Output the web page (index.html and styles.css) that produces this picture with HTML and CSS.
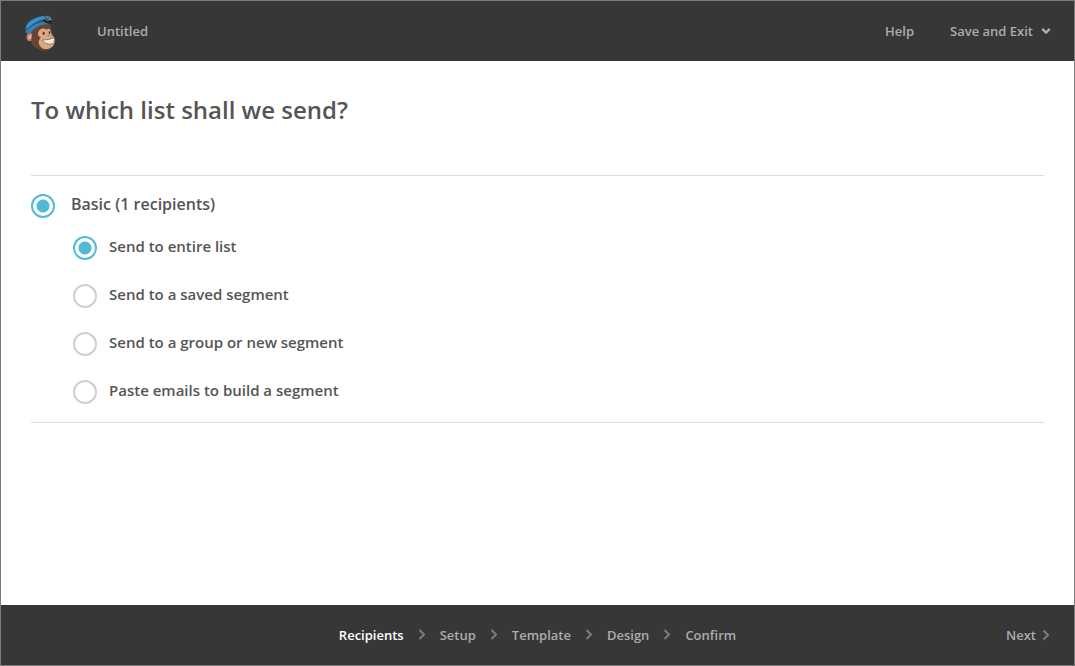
FILE: index.html
```html
<!DOCTYPE html>
<html lang="en">
<head>
<meta charset="utf-8">
<meta name="viewport" content="width=device-width, initial-scale=1">
<title>Campaign Builder</title>
<link rel="stylesheet" href="styles.css">
</head>
<body>
<div class="app">
  <header class="bar">
    <a class="logo" href="#" aria-label="Home">
      <svg viewBox="24 18 102 114" width="34" height="38" aria-hidden="true">
        <path d="M42 68C40 58 46 48 60 43L94 38C106 42 109 54 108 66L116 82C123 92 122 108 113 118C104 130 84 131 72 124C60 118 51 112 48 101Z" fill="#674433"/>
        <path d="M48 99C38 101 33 93 35 84C37 74 47 72 52 79Z" fill="#bd866a"/>
        <path d="M47 94C41 94 39 89 41 84C43 80 48 81 49 84Z" fill="#e9b597"/>
        <path d="M70 72C77 58 91 61 94 66C101 57 109 65 107 75L113 83C123 91 121 108 111 116C101 126 83 125 77 116C69 109 70 96 77 89C70 85 67 79 70 72Z" fill="#d9a987"/>
        <path d="M82 96C94 97 107 93 117 89C119 97 118 105 112 107C102 110 88 108 82 96Z" fill="#fffaf0" stroke="#6d4a3a" stroke-width="2"/>
        <path d="M84 101C96 104 108 101 118 98" fill="none" stroke="#aa8b77" stroke-width="1"/>
        <ellipse cx="86" cy="76" rx="3" ry="5" fill="#49342d"/>
        <ellipse cx="103" cy="74" rx="2" ry="5" fill="#49342d"/>
        <path d="M97 84L103 83M107 84L110 83" stroke="#7e5140" stroke-width="2"/>
        <path d="M31 68C30 53 37 43 50 34C61 27 77 24 92 23C103 22 111 27 113 37L106 50C80 43 58 54 42 76Z" fill="#2b5f89"/>
        <path d="M33 58C38 41 62 27 89 24C99 24 105 27 107 31C82 30 57 42 37 62Z" fill="#4091c8"/>
        <path d="M32 68C48 47 77 37 104 42L112 50C84 46 65 52 46 75C40 80 32 76 32 68Z" fill="#3a80b7"/>
        <path d="M35 66C52 49 72 41 90 39" fill="none" stroke="#24517a" stroke-width="3"/>
        <path d="M82 37C91 33 103 34 113 39L109 51L96 46C92 45 86 43 82 37Z" fill="#202d38"/>
        <path d="M86 25L93 34L103 27L109 35L96 38Z" fill="#948f68"/>
        <path d="M89 26L98 35M103 30L97 34" stroke="#202d38" stroke-width="3"/>
      </svg>
    </a>
    <span class="campaign">Untitled</span>
    <nav class="actions" aria-label="Account">
      <a href="#">Help</a>
      <button class="menu" type="button">Save and Exit
        <svg viewBox="0 0 10 8" width="10" height="8" aria-hidden="true"><path d="M1.2 1.8L5 5.6L8.8 1.8" fill="none" stroke="currentColor" stroke-width="2.4"/></svg>
      </button>
    </nav>
  </header>
  <main class="content">
    <h1>To which list shall we send?</h1>
    <form class="lists">
      <label class="option list"><input type="radio" name="list" checked><span>Basic (1 recipients)</span></label>
      <div class="segments">
        <label class="option"><input type="radio" name="segment" checked><span>Send to entire list</span></label>
        <label class="option"><input type="radio" name="segment"><span>Send to a saved segment</span></label>
        <label class="option"><input type="radio" name="segment"><span>Send to a group or new segment</span></label>
        <label class="option"><input type="radio" name="segment"><span>Paste emails to build a segment</span></label>
      </div>
    </form>
  </main>
  <footer class="bar footer">
    <nav class="steps" aria-label="Steps">
      <a class="current" href="#" aria-current="step">Recipients</a>
      <svg class="chevron" viewBox="0 0 8 12" width="8" height="12" aria-hidden="true"><path d="M1.5 1L6 5.5L1.5 10"/></svg>
      <a href="#">Setup</a>
      <svg class="chevron" viewBox="0 0 8 12" width="8" height="12" aria-hidden="true"><path d="M1.5 1L6 5.5L1.5 10"/></svg>
      <a href="#">Template</a>
      <svg class="chevron" viewBox="0 0 8 12" width="8" height="12" aria-hidden="true"><path d="M1.5 1L6 5.5L1.5 10"/></svg>
      <a href="#">Design</a>
      <svg class="chevron" viewBox="0 0 8 12" width="8" height="12" aria-hidden="true"><path d="M1.5 1L6 5.5L1.5 10"/></svg>
      <a href="#">Confirm</a>
    </nav>
    <a class="next" href="#">Next
      <svg class="chevron" viewBox="0 0 8 12" width="8" height="12" aria-hidden="true"><path d="M1.5 1.5L6 6L1.5 10.5"/></svg>
    </a>
  </footer>
</div>
</body>
</html>
```
FILE: styles.css
```css
* {
  box-sizing: border-box;
}

body {
  margin: 0;
  background: #fff;
  color: #555;
  font-family: "Open Sans", "Noto Sans", sans-serif;
}

.app {
  display: flex;
  flex-direction: column;
  min-height: 100vh;
  border: 1px solid #7b7b7b;
}

.bar {
  display: flex;
  align-items: center;
  min-height: 60px;
  padding: 0 23px 0 22px;
  background: #373737;
  color: #acacac;
  font-size: 13px;
  font-weight: 600;
  line-height: 20px;
}

.bar a,
.menu {
  color: inherit;
  text-decoration: none;
}

.logo svg {
  display: block;
}

.logo {
  margin-top: 4px;
}

.campaign {
  margin-left: 40px;
}

.actions {
  display: flex;
  gap: 36px;
  margin-left: auto;
}

.menu {
  display: flex;
  align-items: center;
  gap: 8px;
  padding: 0;
  border: 0;
  background: none;
  font: inherit;
}

.content {
  flex: 1;
  padding: 30px;
}

h1 {
  margin: 0 0 46px;
  font-size: 24px;
  font-weight: 600;
  line-height: 38px;
}

.lists {
  padding: 15px 0 18px;
  border: solid #dcdcdc;
  border-width: 1px 0;
}

.option {
  display: flex;
  align-items: flex-end;
  gap: 12px;
  width: fit-content;
  font-size: 15px;
  font-weight: 600;
  line-height: 26px;
}

.option span {
  padding-bottom: 1px;
}

.list {
  gap: 16px;
  font-size: 16px;
}

.option input {
  appearance: none;
  flex: none;
  width: 24px;
  height: 24px;
  margin: 0;
  border: 2px solid #d0d0d0;
  border-radius: 50%;
  background: #fff;
}

.option input:checked {
  border-color: #52bad5;
  background: radial-gradient(circle, #52bad5 6px, #fff 7px);
}

.segments {
  display: grid;
  gap: 21px;
  padding: 15px 0 0 42px;
}

.footer {
  display: grid;
  grid-template-columns: 1fr auto 1fr;
  padding: 0 24px;
}

.steps {
  display: flex;
  grid-column: 2;
  align-items: center;
  gap: 14px;
}

.bar .current {
  color: #fff;
}

.chevron {
  fill: none;
  stroke: #7c7c7c;
  stroke-width: 2;
}

.next {
  display: flex;
  align-items: center;
  justify-self: end;
  gap: 6px;
}
```
